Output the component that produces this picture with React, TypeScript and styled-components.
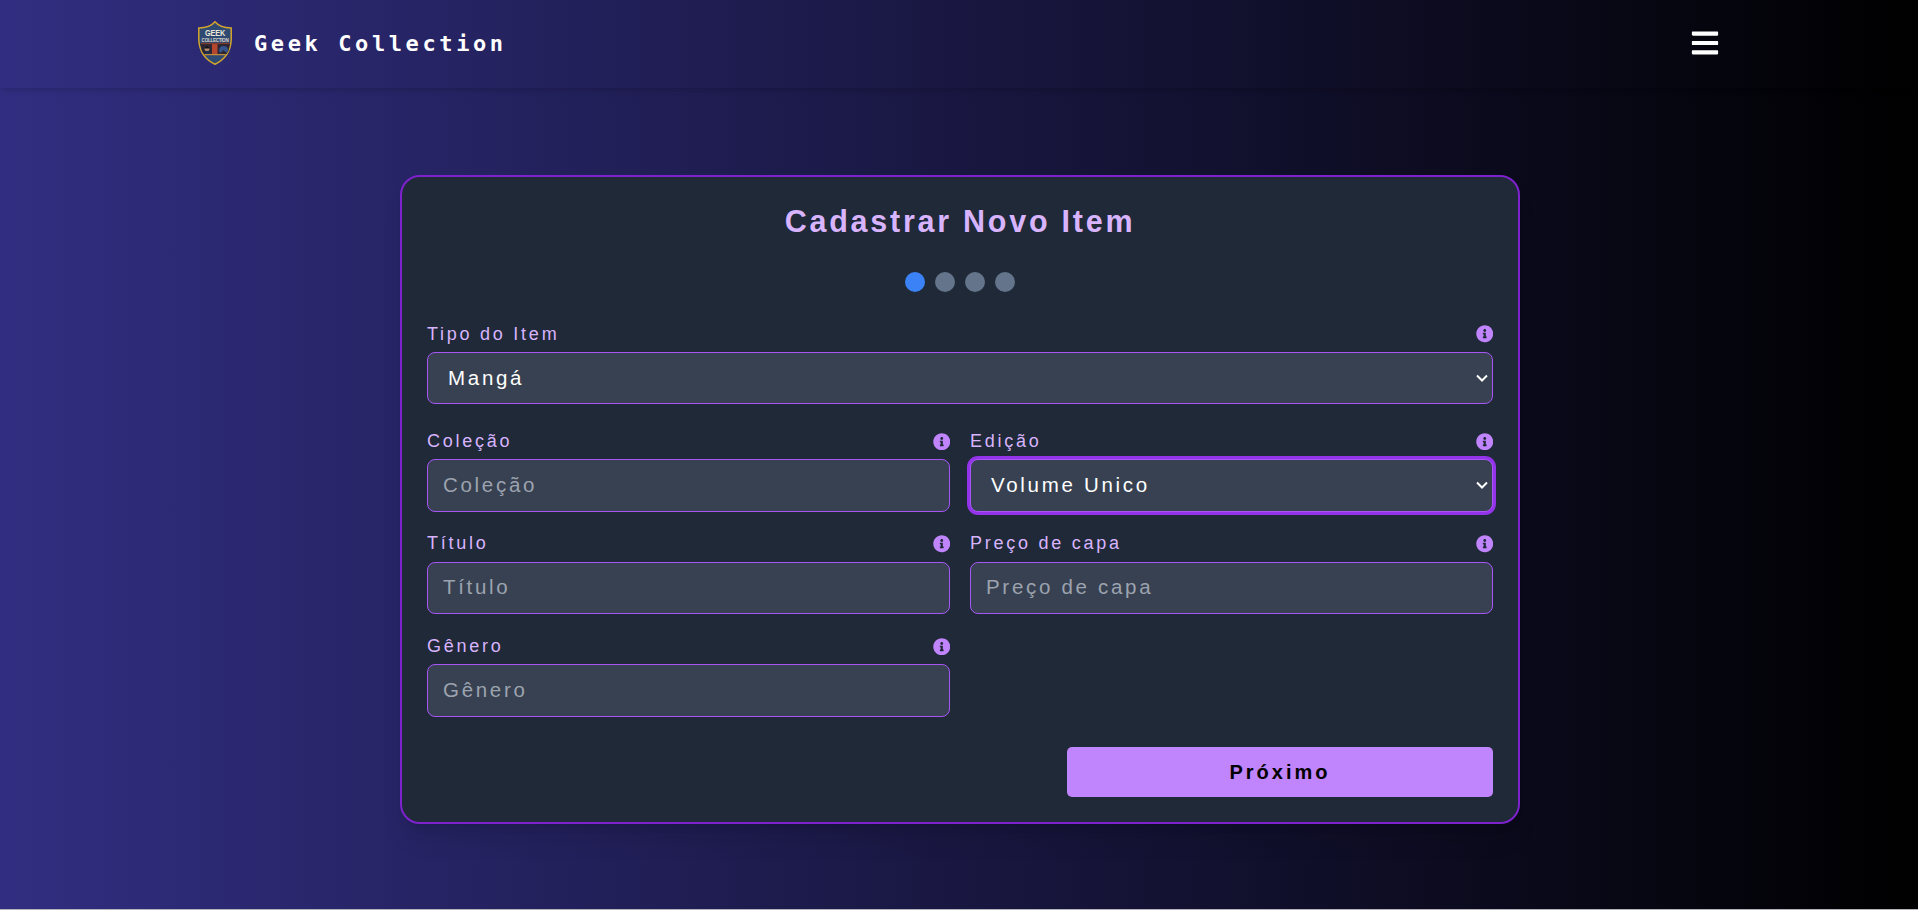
import React from "react";
import styled, { createGlobalStyle } from "styled-components";
import { FaBars, FaInfoCircle } from "react-icons/fa";

const GlobalStyle = createGlobalStyle`
  *, *::before, *::after { box-sizing: border-box; }
  html, body { margin: 0; padding: 0; overflow: hidden; background: #b3b3bb; }
  body { font-family: "Liberation Sans", Arial, sans-serif; letter-spacing: 3px; }
`;

const Page = styled.div`
  width: 1920px;
  height: 909px;
  display: flex;
  flex-direction: column;
  background: linear-gradient(to right, #312e81, #000000);
`;

const Header = styled.header`
  height: 88px;
  flex: none;
  box-shadow: 0 4px 6px -1px rgba(0, 0, 0, 0.1), 0 2px 4px -2px rgba(0, 0, 0, 0.1);
`;

const HeaderInner = styled.div`
  width: 1536px;
  height: 100%;
  margin: 0 auto;
  padding: 0 8px 2px 5px;
  display: flex;
  align-items: center;
  justify-content: space-between;
`;

const Brand = styled.div`
  display: flex;
  align-items: center;
  gap: 20px;
`;

const BrandName = styled.span`
  padding-top: 2px;
  font-family: "DejaVu Sans Mono", monospace;
  font-weight: 700;
  font-size: 22px;
  line-height: 32px;
  letter-spacing: 3.6px;
  color: #fff;
`;

const MenuButton = styled.button`
  display: flex;
  padding: 0;
  border: 0;
  background: none;
  color: #fff;
  font-size: 30px;
`;

const Main = styled.main`
  flex: 1;
  display: flex;
  justify-content: center;
  align-items: flex-start;
  padding-top: 87px;
`;

const Card = styled.form`
  width: 1120px;
  height: 649px;
  padding: 24px 25px 25px;
  display: flex;
  flex-direction: column;
  border: 2px solid #7e22ce;
  border-radius: 20px;
  background: #1f2937;
  box-shadow: 0 20px 25px -5px rgba(0, 0, 0, 0.1), 0 8px 10px -6px rgba(0, 0, 0, 0.1);
`;

const Title = styled.h1`
  margin: 0;
  font-size: 30.5px;
  line-height: 40px;
  letter-spacing: 2.75px;
  text-align: center;
  color: #d8b4fe;
`;

const Steps = styled.div`
  display: flex;
  justify-content: center;
  gap: 10px;
  margin: 31px 0 27.3px;
`;

const Step = styled.span<{ $active?: boolean }>`
  width: 20px;
  height: 20px;
  border-radius: 50%;
  background: ${(p) => (p.$active ? "#3b82f6" : "#64748b")};
`;

const Fields = styled.div`
  display: grid;
  grid-template-columns: 1fr 1fr;
  column-gap: 20px;
`;

const FieldBox = styled.div<{ $wide?: boolean }>`
  grid-column: ${(p) => (p.$wide ? "1 / -1" : "auto")};
  height: ${(p) => (p.$wide ? "107.3px" : "102.6px")};
`;

const LabelRow = styled.div`
  display: flex;
  align-items: center;
  justify-content: space-between;
  height: 30px;
  margin-bottom: 2.6px;
  padding-bottom: 0.5px;
  font-size: 18px;
  letter-spacing: 2.75px;
  color: #d8b4fe;
`;

const InfoIcon = styled(FaInfoCircle)`
  font-size: 17.5px;
  color: #c084fc;
`;

const Control = styled.div<{ $focused?: boolean; $select?: boolean }>`
  height: 52.4px;
  padding: 0 3px ${(p) => (p.$select ? "0 20px" : "1px 15px")};
  display: flex;
  align-items: center;
  justify-content: space-between;
  border: 1px solid #a855f7;
  border-radius: 8px;
  background: #374151;
  box-shadow: ${(p) => (p.$focused ? "0 0 0 3px #9333ea" : "none")};
  color: ${(p) => (p.$select ? "#fff" : "#9ca3af")};
  font-size: 20.5px;
  letter-spacing: 2.7px;
`;

const Chevron = styled.svg`
  width: 14px;
  height: 14px;
`;

const Actions = styled.div`
  display: flex;
  justify-content: flex-end;
  margin-top: auto;
`;

const NextButton = styled.button`
  width: 426px;
  height: 50px;
  border: 0;
  border-radius: 5px;
  background: #c084fc;
  color: #000;
  font: 700 20px "Liberation Sans", Arial, sans-serif;
  letter-spacing: 3px;
`;

function Logo() {
  return (
    <svg width="37" height="46" viewBox="0 0 37 46" overflow="visible" fontFamily="Liberation Sans Narrow, Liberation Sans, sans-serif" fontWeight="700" textAnchor="middle">
      <path d="M18 1.8 C14.5 6 9 8 1.8 8 V20 C2.5 32 9 40 18 44.2 C27 40 33.5 32 34.2 20 V8 C27 8 21.5 6 18 1.8Z" fill="#2f4a72" stroke="#d4a62c" strokeWidth="1.5" />
      <path d="M3 23.5H33L31.5 31L29.5 34H7L5 31Z" fill="#2a2532" />
      <path d="M15 23.5H20.5V34H15Z" fill="#b5472f" />
      <path d="M4 23.5H32.5" stroke="#7d3b2c" strokeWidth="1.4" />
      <circle cx="10" cy="28.4" r="2.6" fill="#b78a68" />
      <path d="M6.5 28.4Q10 22.5 13.5 28.4Z" fill="#14141c" />
      <path d="M7.2 31H13V34H8.2Z" fill="#1d2d50" />
      <path d="M22 31Q22 26 26.5 26Q31.5 26 31 31L29.5 33L26.5 30L23.5 33Z" fill="#35548e" />
      <path d="M7.5 34.6H28.5" stroke="#c08a3a" strokeWidth="1.3" />
      <text transform="translate(18 16) scale(0.85 1)" fontSize="8.6" letterSpacing="-0.2" fill="#ece7d8">GEEK</text>
      <text transform="translate(18 22) scale(0.74 1)" fontSize="6.2" letterSpacing="-0.4" fill="#d8d5ca">COLLECTION</text>
    </svg>
  );
}

type FieldProps = { label: string; value?: string; wide?: boolean; focused?: boolean };

function Field({ label, value, wide, focused }: FieldProps) {
  return (
    <FieldBox $wide={wide}>
      <LabelRow>
        <span>{label}</span>
        <InfoIcon />
      </LabelRow>
      <Control $select={!!value} $focused={focused}>
        <span>{value ?? label}</span>
        {value && (
          <Chevron viewBox="0 0 14 14" fill="none" stroke="#fff" strokeWidth="2">
            <path d="M2 4.5L7 9.5L12 4.5" />
          </Chevron>
        )}
      </Control>
    </FieldBox>
  );
}

export default function App() {
  return (
    <>
      <GlobalStyle />
      <Page>
        <Header>
          <HeaderInner>
            <Brand>
              <Logo />
              <BrandName>Geek Collection</BrandName>
            </Brand>
            <MenuButton type="button" aria-label="Menu">
              <FaBars />
            </MenuButton>
          </HeaderInner>
        </Header>
        <Main>
          <Card>
            <Title>Cadastrar Novo Item</Title>
            <Steps>
              <Step $active />
              <Step />
              <Step />
              <Step />
            </Steps>
            <Fields>
              <Field label="Tipo do Item" value="Mangá" wide />
              <Field label="Coleção" />
              <Field label="Edição" value="Volume Unico" focused />
              <Field label="Título" />
              <Field label="Preço de capa" />
              <Field label="Gênero" />
            </Fields>
            <Actions>
              <NextButton type="button">Próximo</NextButton>
            </Actions>
          </Card>
        </Main>
      </Page>
    </>
  );
}
